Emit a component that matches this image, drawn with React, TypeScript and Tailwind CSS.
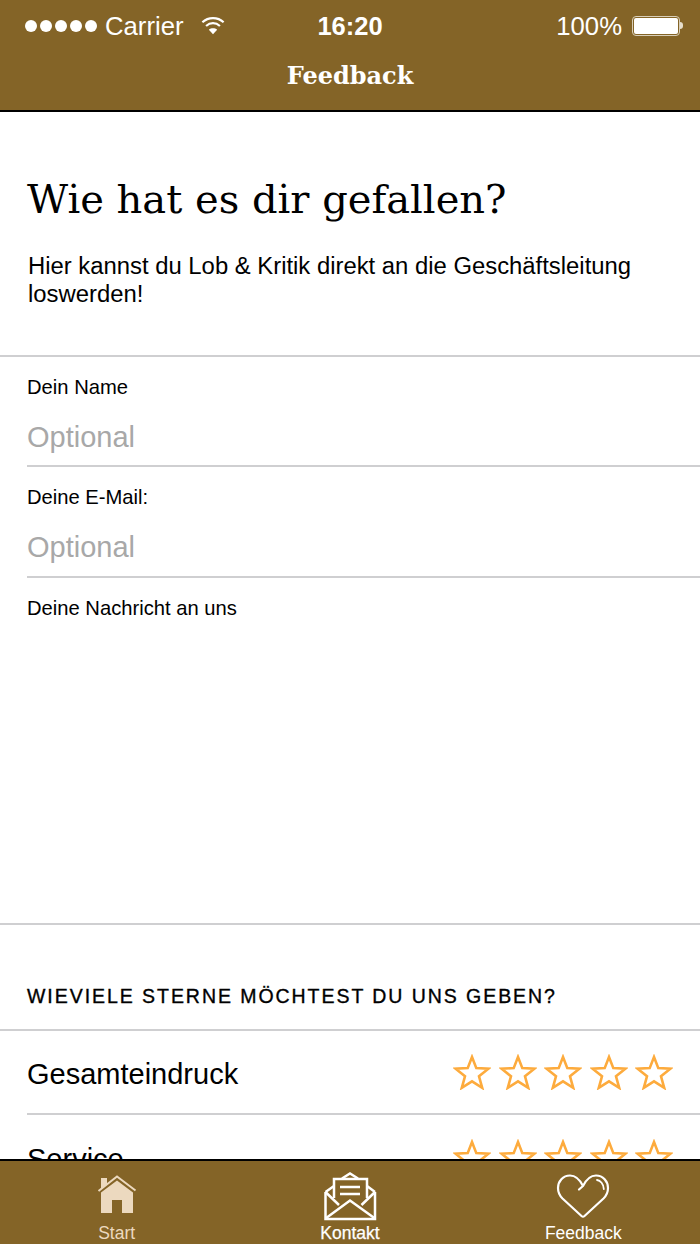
function Star() {
  return (
    <svg width="38" height="36" viewBox="0 0 38 36" className="shrink-0">
      <path
        d="M19 3 L23.3 14.1 L35.4 14.7 L26 22.3 L29.2 33.8 L19 27.3 L8.8 33.8 L12 22.3 L2.6 14.7 L14.7 14.1 Z"
        fill="none"
        stroke="#fdab3d"
        strokeWidth="2.6"
      />
    </svg>
  )
}

function Stars() {
  return (
    <div className="flex gap-[7.4px]">
      <Star />
      <Star />
      <Star />
      <Star />
      <Star />
    </div>
  )
}

function RatingRow({ label, last }: { label: string; last?: boolean }) {
  return (
    <div className={`ml-[27px] flex h-[84px] shrink-0 items-center justify-between pr-[27px] ${last ? '' : 'border-b-2 border-[#cfcfd1]'}`}>
      <span className="pt-[4px] text-[29px] leading-[36px] text-black">{label}</span>
      <Stars />
    </div>
  )
}

function Field({ label, height, last }: { label: string; height: string; last?: boolean }) {
  return (
    <div className={`${height} ${last ? 'pl-[27px]' : 'ml-[27px] border-b-2 border-[#cfcfd1]'} shrink-0 pt-[18px]`}>
      <div className="text-[20.2px] leading-[24px] text-black">{label}</div>
      {!last && <div className="mt-[20px] text-[29px] leading-[36px] text-[#a8a8a8]">Optional</div>}
    </div>
  )
}

export default function App() {
  return (
    <div className="flex h-[1244px] w-[700px] flex-col overflow-hidden bg-white font-['Liberation_Sans',Arial,sans-serif]">
      <header className="h-[112px] shrink-0 border-b-2 border-black bg-[#846427] text-white">
        <div className="relative flex h-[52px] items-center justify-between pl-[25px] pr-[17px] text-[25.7px]">
          <div className="flex items-center">
            <div className="flex gap-[3px]">
              <span className="h-[12px] w-[12px] rounded-full bg-white" />
              <span className="h-[12px] w-[12px] rounded-full bg-white" />
              <span className="h-[12px] w-[12px] rounded-full bg-white" />
              <span className="h-[12px] w-[12px] rounded-full bg-white" />
              <span className="h-[12px] w-[12px] rounded-full bg-white" />
            </div>
            <span className="ml-[8px]">Carrier</span>
            <svg width="24" height="21" viewBox="0 0 26 22" className="mb-[1px] ml-[17px]" fill="none" stroke="white" strokeWidth="2.4">
              <path d="M1.5 7.5 C8 1.5 18 1.5 24.5 7.5" />
              <path d="M5.5 11.5 C10 7.5 16 7.5 20.5 11.5" />
              <path d="M13 20.5 L8.5 15.5 C11 13.5 15 13.5 17.5 15.5 Z" fill="white" stroke="none" />
            </svg>
          </div>
          <span className="absolute left-1/2 -translate-x-1/2 text-[25.5px] font-bold">16:20</span>
          <div className="flex items-center">
            <span>100%</span>
            <div className="ml-[10px] flex items-center">
              <div className="h-[20px] w-[48px] rounded-[4px] border border-[#d9cfb9] p-[1px]">
                <div className="h-full w-full rounded-[2px] bg-white" />
              </div>
              <div className="h-[7px] w-[3px] rounded-r-full bg-[#e6decb]" />
            </div>
          </div>
        </div>
        <div className="pt-[2px] text-center font-['DejaVu_Serif',serif] text-[24px] font-bold leading-[44px]">Feedback</div>
      </header>

      <main className="min-h-0 flex-1 overflow-hidden">
        <section className="h-[245px] border-b-2 border-[#cfcfd1] px-[27px] pt-[61px]">
          <h1 className="font-['DejaVu_Serif',serif] text-[40px] leading-[52px] text-black">Wie hat es dir gefallen?</h1>
          <p className="mt-[27px] pl-[1px] text-[23.85px] leading-[28px] text-black">
            Hier kannst du Lob &amp; Kritik direkt an die Geschäftsleitung loswerden!
          </p>
        </section>
        <Field label="Dein Name" height="h-[110px]" />
        <Field label="Deine E-Mail:" height="h-[111px]" />
        <div className="h-[347px] border-b-2 border-[#cfcfd1]">
          <Field label="Deine Nachricht an uns" height="h-full" last />
        </div>
        <div className="flex h-[106px] items-end border-b-2 border-[#cfcfd1] px-[27px] pb-[21px]">
          <h2 className="text-[19.5px] font-normal uppercase leading-[24px] tracking-[1.95px] text-black [-webkit-text-stroke:0.35px_black]">
            Wieviele Sterne möchtest du uns geben?
          </h2>
        </div>
        <RatingRow label="Gesamteindruck" />
        <RatingRow label="Service" last />
      </main>

      <nav className="grid h-[85px] shrink-0 grid-cols-3 border-t-2 border-black bg-[#846427] text-[17.5px]">
        <div className="flex flex-col items-center pt-[4px] text-[#ecd9bf]">
          <svg width="60" height="56" viewBox="-3 0 60 56">
            <path d="M8.5 26 L27 11.5 L45.5 25.5" fill="none" stroke="#846427" strokeWidth="4.5" />
            <path d="M11 13 H17 V19.5 L11 24 Z" fill="#ecd9bf" />
            <path d="M27 15.5 L43 27.5 V48 H32 V35 H22 V48 H11 V27.5 Z" fill="#ecd9bf" />
            <path d="M8.5 26 L27 11.5 L45.5 25.5" fill="none" stroke="#ecd9bf" strokeWidth="2" />
          </svg>
          <span className="mt-[2px] leading-[20px]">Start</span>
        </div>
        <div className="flex flex-col items-center pt-[4px] text-white [-webkit-text-stroke:0.25px_white]">
          <svg width="60" height="56" viewBox="0 0 60 56" fill="none" stroke="white" strokeWidth="2.5">
            <path d="M5.5 27 V54 H55 V27" />
            <path d="M5.5 27 L14 21 M55 27 L47 21" />
            <path d="M14 33 V14 H47 V33" />
            <path d="M22 13.5 L30 8.5 L38 13.5" />
            <path d="M5.5 53.5 L30 35.5 L55 53.5" />
            <path d="M5.5 27 L19 40 M55 27 L41.5 40" />
            <path d="M20 22 H40 M20 29 H40" />
          </svg>
          <span className="mt-[2px] leading-[20px]">Kontakt</span>
        </div>
        <div className="flex flex-col items-center pt-[4px] text-white">
          <svg width="60" height="56" viewBox="0 0 60 56" fill="none" stroke="white" strokeWidth="2.2" strokeLinecap="round" strokeLinejoin="round">
            <path d="M26 24.5 L30 21 C33.5 14 38 10.5 43 10.5 C50 10.5 55 16.5 55 23 C55 28 53 31 50.5 33.5 L31.5 51 C30.5 51.8 29.5 51.8 28.5 51 L9.5 33.5 C7 31 5 28 5 23 C5 16.5 10 10.5 17 10.5 C22 10.5 26.5 14 30 21" />
            <path d="M44 15 C47.5 15.5 50.5 19 50.8 24" strokeWidth="1.8" />
          </svg>
          <span className="mt-[2px] leading-[20px]">Feedback</span>
        </div>
      </nav>
    </div>
  )
}
